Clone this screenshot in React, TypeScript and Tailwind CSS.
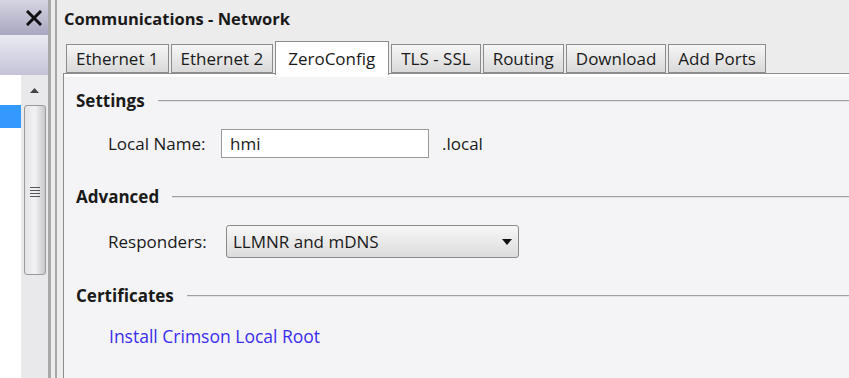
const tabs = ['Ethernet 1', 'Ethernet 2', 'ZeroConfig', 'TLS - SSL', 'Routing', 'Download', 'Add Ports']

function GroupHeader({ title }: { title: string }) {
  return (
    <div className="flex items-center gap-[13px] pl-[12px] h-[20px]">
      <span className="font-bold text-[17px] leading-[20px] text-[#1a1a1a]">{title}</span>
      <div className="flex-1 h-[2px] border-t border-[#a0a0a0] bg-[#e2e2e2]" />
    </div>
  )
}

export default function App() {
  return (
    <div
      className="w-[849px] h-[378px] overflow-hidden flex bg-[#ececec] text-[17px] leading-[20px] text-[#1a1a1a]"
      style={{ fontFamily: '"Open Sans", "Noto Sans", sans-serif' }}
    >
      {/* left docked pane */}
      <div className="w-[48px] flex flex-col shrink-0 bg-white">
        <div className="h-[35px] bg-gradient-to-b from-[#d6d5e2] to-[#a9a7c0] flex items-center justify-end pr-[6px]">
          <svg width="16" height="16" viewBox="0 0 16 16">
            <path d="M2 2 L14 14 M14 2 L2 14" stroke="#111" strokeWidth="3" strokeLinecap="square" />
          </svg>
        </div>
        <div className="h-[40px] bg-gradient-to-b from-[#ebebf2] to-[#c4c3d8]" />
        <div className="flex-1 flex">
          <div className="w-[21px] pt-[30px]">
            <div className="h-[23px] bg-[#3399ff]" />
          </div>
          <div className="flex-1 bg-[#e9e9ec] flex flex-col items-center">
            <div className="h-[30px] flex items-center justify-center">
              <svg width="9" height="5" viewBox="0 0 9 5">
                <path d="M0 5 L4.5 0 L9 5 Z" fill="#444" />
              </svg>
            </div>
            <div className="w-[22px] h-[170px] rounded-[3px] border border-[#9a9a9a] bg-gradient-to-r from-[#e4e4e6] via-[#f2f2f4] to-[#c8c8cc] flex items-center justify-center">
              <div className="flex flex-col gap-[2px] mt-[4px]">
                <div className="w-[10px] h-[1px] bg-[#555]" />
                <div className="w-[10px] h-[1px] bg-[#555]" />
                <div className="w-[10px] h-[1px] bg-[#555]" />
                <div className="w-[10px] h-[1px] bg-[#555]" />
              </div>
            </div>
          </div>
        </div>
      </div>

      {/* splitter */}
      <div className="w-[3px] bg-[#a8a8a8] shrink-0" />
      <div className="w-[4px] bg-[#ececec] shrink-0" />
      <div className="w-[2px] bg-[#a8a8a8] shrink-0" />
      <div className="w-[6px] bg-[#ececec] shrink-0" />

      {/* main area */}
      <div className="flex-1 flex flex-col min-w-0">
        <div className="h-[37px] flex items-center pl-[1px] font-bold text-[16.5px] text-[#1a1a1a]">
          Communications - Network
        </div>
        <div className="flex items-end pl-[3px] h-[36px] relative z-10">
          {tabs.map((t) =>
            t === 'ZeroConfig' ? (
              <div
                key={t}
                className="h-[34px] -mb-[2px] pl-[12px] pr-[13px] mr-[2px] flex items-center bg-white border border-b-0 border-[#8c8c8c]"
              >
                {t}
              </div>
            ) : (
              <div
                key={t}
                className="h-[29px] px-[9px] flex items-center mr-[2px] border border-[#8c8c8c] bg-gradient-to-b from-[#f6f6f6] to-[#d9d9d9]"
              >
                {t}
              </div>
            )
          )}
        </div>
        <div className="flex-1 border-l border-t border-[#8c8c8c] bg-[#f4f4f6] flex flex-col">
          <div className="h-[3px] bg-white" />
          <div className="pt-[14px]">
            <GroupHeader title="Settings" />
            <div className="flex items-center pl-[44px] mt-[18px]">
              <span className="w-[113px]">Local Name:</span>
              <div className="w-[208px] h-[29px] bg-white border border-[#9a9a9a] flex items-center pl-[8px]">hmi</div>
              <span className="ml-[13px]">.local</span>
            </div>
          </div>
          <div className="mt-[29px]">
            <GroupHeader title="Advanced" />
            <div className="flex items-center pl-[44px] mt-[18px]">
              <span className="w-[118px]">Responders:</span>
              <div className="w-[293px] h-[33px] rounded-[3px] border border-[#8a8a8a] bg-gradient-to-b from-[#f7f7f7] to-[#dcdcdc] flex items-center justify-between pl-[6px] pr-[6px]">
                <span>LLMNR and mDNS</span>
                <svg width="10" height="6" viewBox="0 0 10 6">
                  <path d="M0 0 L10 0 L5 6 Z" fill="#111" />
                </svg>
              </div>
            </div>
          </div>
          <div className="mt-[28px]">
            <GroupHeader title="Certificates" />
            <div className="pl-[45px] mt-[20px] text-[#3a2df0] text-[17.5px]">Install Crimson Local Root</div>
          </div>
        </div>
      </div>
    </div>
  )
}
